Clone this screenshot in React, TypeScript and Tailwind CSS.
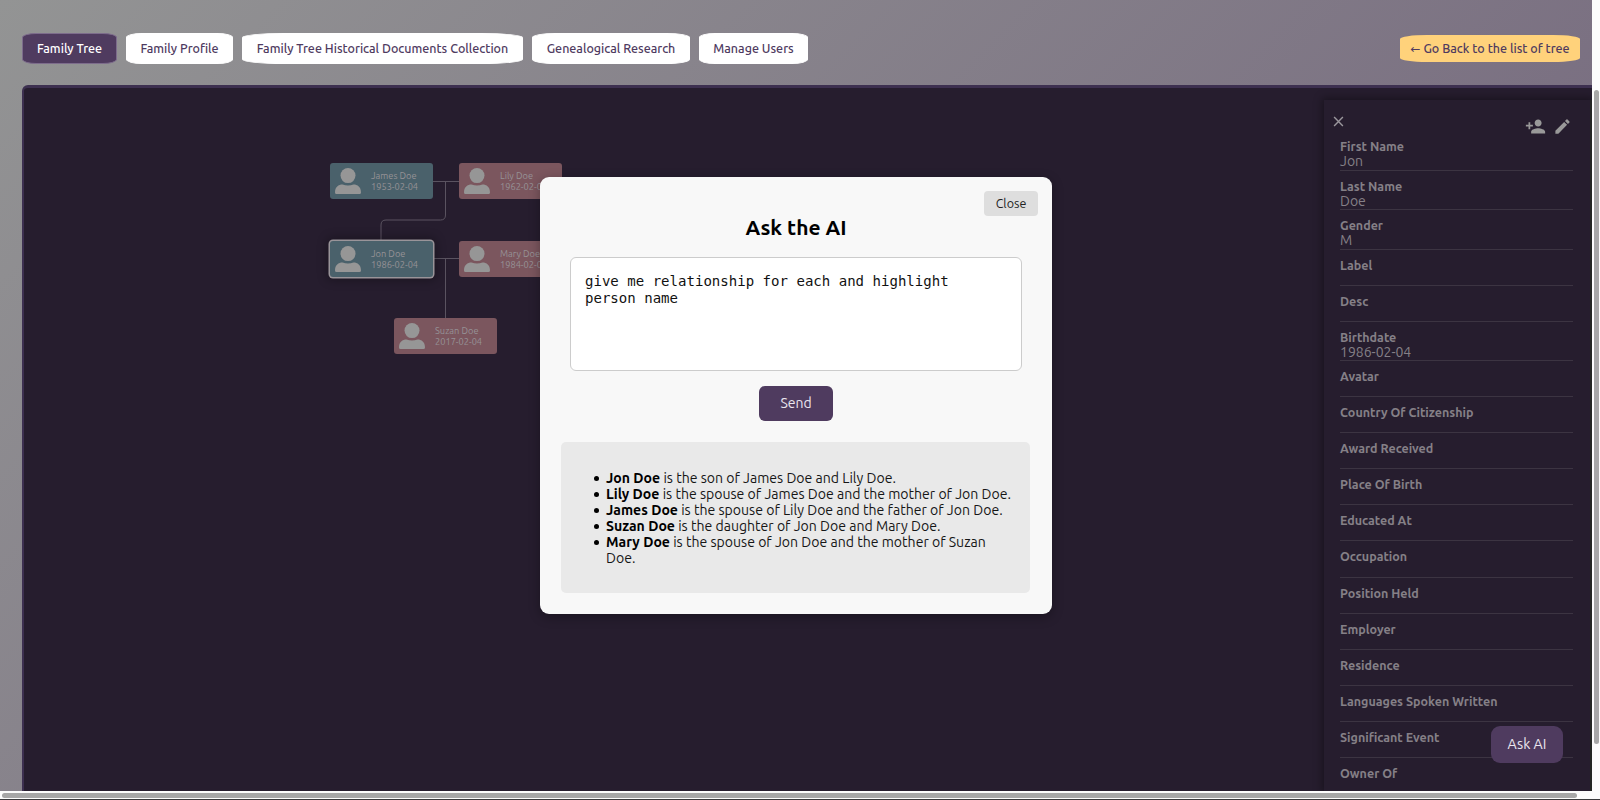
import { MdEdit, MdPersonAdd } from "react-icons/md";

const tabs = [
  { label: "Family Tree", width: "w-[95px]", active: true },
  { label: "Family Profile", width: "w-[107px]" },
  { label: "Family Tree Historical Documents Collection", width: "w-[281px]" },
  { label: "Genealogical Research", width: "w-[158px]" },
  { label: "Manage Users", width: "w-[109px]" },
];

const people = [
  { name: "James Doe", date: "1953-02-04", place: "left-[306px] top-[75px]", color: "bg-[#4a616b]" },
  { name: "Lily Doe", date: "1962-02-04", place: "left-[435px] top-[75px]", color: "bg-[#7b565e]" },
  {
    name: "Jon Doe",
    date: "1986-02-04",
    place: "left-[306px] top-[153px]",
    color: "bg-[#4a616b] ring-[1.5px] ring-[#999499] shadow-[0_0_10px_4px_rgba(0,0,0,0.25)]",
  },
  { name: "Mary Doe", date: "1984-02-04", place: "left-[435px] top-[153px]", color: "bg-[#7b565e]" },
  { name: "Suzan Doe", date: "2017-02-04", place: "left-[370px] top-[230px]", color: "bg-[#7b565e]" },
];

const fields: { label: string; value?: string }[] = [
  { label: "First Name", value: "Jon" },
  { label: "Last Name", value: "Doe" },
  { label: "Gender", value: "M" },
  { label: "Label" },
  { label: "Desc" },
  { label: "Birthdate", value: "1986-02-04" },
  { label: "Avatar" },
  { label: "Country Of Citizenship" },
  { label: "Award Received" },
  { label: "Place Of Birth" },
  { label: "Educated At" },
  { label: "Occupation" },
  { label: "Position Held" },
  { label: "Employer" },
  { label: "Residence" },
  { label: "Languages Spoken Written" },
  { label: "Significant Event" },
  { label: "Owner Of" },
];

const answers = [
  { who: "Jon Doe", text: "is the son of James Doe and Lily Doe." },
  { who: "Lily Doe", text: "is the spouse of James Doe and the mother of Jon Doe." },
  { who: "James Doe", text: "is the spouse of Lily Doe and the father of Jon Doe." },
  { who: "Suzan Doe", text: "is the daughter of Jon Doe and Mary Doe." },
  { who: "Mary Doe", text: "is the spouse of Jon Doe and the mother of Suzan Doe." },
];

function Header() {
  return (
    <header className="flex h-[85px] shrink-0 items-start justify-between pl-[22px] pr-3 pt-[33px]">
      <nav className="flex gap-[9px]">
        {tabs.map((tab) => (
          <button
            key={tab.label}
            className={`h-[31px] shrink-0 whitespace-nowrap rounded-[15%] border px-0 text-[12.5px] font-medium ${tab.width} ${
              tab.active ? "border-[#7d6c8c] bg-[#4f3b5f] text-white" : "border-white bg-white text-[#4f3b5f]"
            }`}
          >
            {tab.label}
          </button>
        ))}
      </nav>
      <button className="mt-[2px] h-[27px] w-[180px] whitespace-nowrap rounded-[15%] bg-[#ffd27b] text-[12.5px] font-medium text-[#4f3b5f]">
        <span className="font-['DejaVu_Sans'] text-[12px] leading-none">←</span> Go Back to the list of tree
      </button>
    </header>
  );
}

function PersonCard({ name, date, place, color }: (typeof people)[number]) {
  return (
    <div className={`absolute flex h-9 w-[103px] items-center rounded-[3px] ${place} ${color}`}>
      <svg viewBox="0 0 26 26" className="ml-[5px] size-[26px] shrink-0 fill-[#969696]">
        <circle cx="13" cy="7.6" r="7.5" />
        <path d="M0 24.5C0 19 3.5 16.6 7.5 16.6q5.500 2 11 0c4 0 7.500 2.400 7.500 7.900q0 1.500-1.500 1.500h-23Q0 26 0 24.500Z" />
      </svg>
      <div className="ml-[10px] whitespace-nowrap text-[9.25px] leading-[11px] text-[#969296]">
        <p>{name}</p>
        <p>{date}</p>
      </div>
    </div>
  );
}

function TreeCanvas() {
  return (
    <div className="relative min-w-0 flex-1">
      <svg className="absolute left-0 top-0 h-[320px] w-[560px] fill-none stroke-[#5a5360]">
        <path d="M409 93.500H435M421.500 93.500V127q0 5-5 5H362q-5 0-5 5V153" />
        <path d="M409 170.500H435M421.500 170.500V230" />
      </svg>
      {people.map((person) => (
        <PersonCard key={person.name} {...person} />
      ))}
    </div>
  );
}

function DetailPanel() {
  return (
    <aside className="mt-3 flex w-[268px] shrink-0 flex-col border-r-2 border-[#242624] bg-[#261d2e] pl-4 pr-[17px] text-[#858087] shadow-[0_0_8px_2px_rgba(0,0,0,0.35)]">
      <div className="flex h-[31px] shrink-0 justify-between pt-4">
        <svg viewBox="0 0 10 10" className="-ml-[7px] size-[11px] fill-none stroke-[#9a969c] stroke-[1.300]">
          <path d="M1 1 9 9M9 1 1 9" />
        </svg>
        <div className="mr-px flex gap-[7px] text-[#999]">
          <MdPersonAdd className="size-[21px]" />
          <MdEdit className="mt-[1px] size-[19px]" />
        </div>
      </div>
      {fields.map((field) => (
        <div
          key={field.label}
          className={`flex shrink-0 flex-col border-b border-[#3c3442] pt-[7px] ${field.value ? "h-[39.600px]" : "h-[36.020px]"}`}
        >
          <p className="text-[12.500px] font-bold leading-4">{field.label}</p>
          {field.value && <p className="text-sm leading-[15px]">{field.value}</p>}
        </div>
      ))}
    </aside>
  );
}

function AskDialog() {
  return (
    <section className="relative flex h-[437px] w-[512px] flex-col items-center rounded-[9px] bg-[#f8f8f8] text-black shadow-[0_3px_12px_rgba(0,0,0,0.3)]">
      <button className="mr-[14px] mt-[14px] h-[25px] w-[54px] self-end rounded-[4px] bg-[#dedede] text-[12.500px] text-[#222]">
        Close
      </button>
      <h2 className="-mt-px text-[21px] font-bold leading-6">Ask the AI</h2>
      <div className="mt-[18px] h-[114px] w-[452px] rounded-[6px] border border-[#ccc] bg-white py-[15px] pl-[14px] pr-9 font-['DejaVu_Sans_Mono',monospace] text-[14.050px] leading-[17px] text-[#111]">
        give me relationship for each and highlight person name
      </div>
      <button className="mt-[15px] h-[35px] w-[74px] rounded-[6px] bg-[#4f3b5f] pb-px text-sm text-[#ebe6ef]">Send</button>
      <div className="mr-px mt-[21px] h-[151px] w-[469px] rounded-[5px] bg-[#e9e9e9] pl-[45px] pr-3 pt-[28px] text-[#161616]">
        <ul className="text-[14.070px] leading-4">
          {answers.map((answer) => (
            <li
              key={answer.who}
              className="relative before:absolute before:-left-[12px] before:top-[6px] before:size-[5px] before:rounded-full before:bg-black before:content-['']"
            >
              <strong className="font-bold text-black">{answer.who}</strong> {answer.text}
            </li>
          ))}
        </ul>
      </div>
    </section>
  );
}

export default function App() {
  return (
    <div className="relative grid h-[800px] w-[1600px] grid-cols-[1592px_8px] grid-rows-[791px_9px] overflow-hidden bg-[#fcfcfc] font-['Ubuntu','Noto_Sans',sans-serif]">
      <div className="flex min-h-0 flex-col overflow-hidden bg-[linear-gradient(135deg,#939494,#70617a)]">
        <Header />
        <main className="ml-[22px] flex min-h-0 flex-1 overflow-hidden rounded-tl-[6px] border-l-2 border-t-[3px] border-[#3d3050] bg-[#261d2e]">
          <TreeCanvas />
          <DetailPanel />
        </main>
      </div>
      <div className="flex justify-center pt-[90px]">
        <div className="h-[654px] w-[5px] rounded-full bg-[#a7a7a7]" />
      </div>
      <div className="col-span-2 border-b border-[#3a3a3c] pl-[2px] pt-[2px]">
        <div className="h-[5px] w-[1575px] rounded-full bg-[#a7a7a7]" />
      </div>
      <div className="absolute left-[540px] top-[177px]">
        <AskDialog />
      </div>
      <button className="absolute left-[1491px] top-[726px] h-[37px] w-[72px] rounded-[9px] bg-[#4f3b5f] pt-px text-[14.200px] text-[#ebe6ef]">
        Ask AI
      </button>
    </div>
  );
}
